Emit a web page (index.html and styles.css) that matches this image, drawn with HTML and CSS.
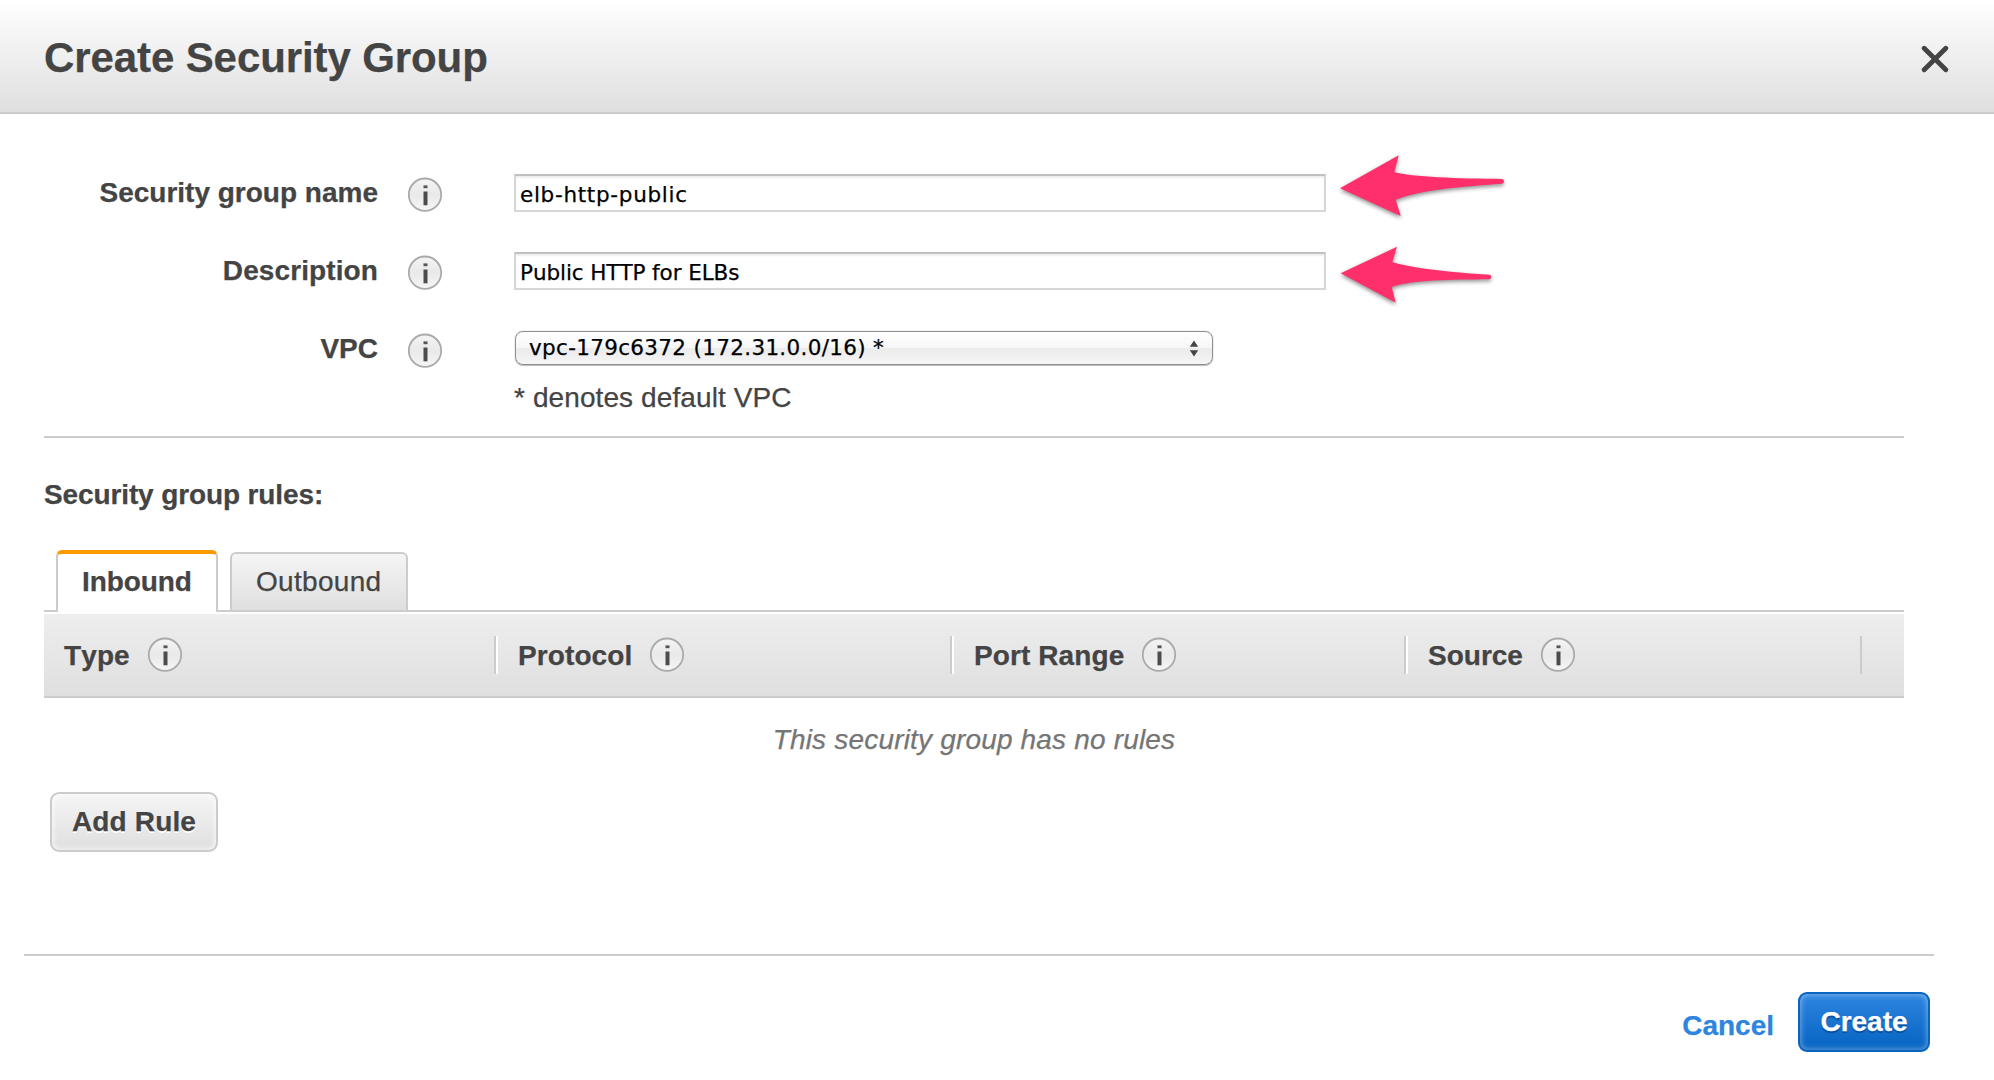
FILE: index.html
```html
<!DOCTYPE html>
<html lang="en">
<head>
<meta charset="utf-8">
<title>Create Security Group</title>
<link rel="stylesheet" href="styles.css">
</head>
<body>
<svg width="0" height="0" class="defs" aria-hidden="true">
  <defs>
    <linearGradient id="info-fill" x1="0" y1="0" x2="0" y2="1">
      <stop offset="0" stop-color="#f4f4f4"/>
      <stop offset=".5" stop-color="#e9e9e9"/>
      <stop offset="1" stop-color="#f6f6f6"/>
    </linearGradient>
    <symbol id="info" viewBox="0 0 36 36">
      <circle cx="18" cy="17.7" r="16.2" fill="url(#info-fill)" stroke="#aaa" stroke-width="1.8"/>
      <rect x="16.5" y="8.4" width="4" height="2.8" fill="#555"/>
      <rect x="16.500" y="14.500" width="4" height="13.800" fill="#4c4c4c"/>
    </symbol>
  </defs>
</svg>
<div class="dialog">
  <header class="header">
    <h1 class="title">Create Security Group</h1>
    <svg class="close" viewBox="0 0 28 28"><path d="M3.2 3.2 24.8 24.8M24.8 3.2 3.2 24.8" fill="none" stroke="#444" stroke-width="4.8" stroke-linecap="round"/></svg>
  </header>
  <main class="body">
    <form class="form">
      <div class="row">
        <label class="label">Security group name</label>
        <svg class="info"><use href="#info"/></svg>
        <div class="field"><span class="name">elb-http-public</span></div>
      </div>
      <div class="row">
        <label class="label label-wide">Description</label>
        <svg class="info"><use href="#info"/></svg>
        <div class="field"><span class="desc">Public HTTP for ELBs</span></div>
      </div>
      <div class="row">
        <label class="label">VPC</label>
        <svg class="info"><use href="#info"/></svg>
        <div class="select"><span class="vpc">vpc-179c6372 (172.31.0.0/16) *</span>
          <svg class="stepper" viewBox="0 0 10 16"><path d="M.8 6.2 5 0l4.200 6.200zM.8 9.800 5 16l4.200-6.200z" fill="#444"/></svg>
        </div>
      </div>
      <p class="note">* denotes default VPC</p>
    </form>
    <h2 class="subtitle">Security group rules:</h2>
    <nav class="tabs">
      <div class="tab tab-active">Inbound</div>
      <div class="tab">Outbound</div>
    </nav>
    <div class="columns">
      <div class="column"><span class="heading">Type</span><svg class="info"><use href="#info"/></svg></div>
      <div class="column"><span class="heading">Protocol</span><svg class="info"><use href="#info"/></svg></div>
      <div class="column"><span class="heading">Port Range</span><svg class="info"><use href="#info"/></svg></div>
      <div class="column column-last"><span class="heading">Source</span><svg class="info"><use href="#info"/></svg></div>
    </div>
    <p class="empty">This security group has no rules</p>
    <button class="button add">Add Rule</button>
  </main>
  <footer class="footer">
    <a class="cancel">Cancel</a>
    <button class="button create">Create</button>
  </footer>
  <svg class="arrows" viewBox="0 0 180 170">
    <path d="M10 38.3 68.7 5.3 64.3 22.3C82 27 128 28.6 172 29A2.4 2.4 0 0 1 172.2 33.7C128 36.5 86 41 65.7 49.7L70.7 66Z"/>
    <path d="M10.7 123.300 67 96.700 62.300 112C82 118.500 120 122 159 124.800A2.200 2.200 0 0 1 159 129.300C120 129.600 82 130 61.700 137L65.700 152.700Z"/>
  </svg>
</div>
</body>
</html>
```

FILE: styles.css
```css
* { box-sizing: border-box; }
body {
  margin: 0;
  background: #fff;
  color: #444;
  font: 28px/32px "Liberation Sans", Arial, Helvetica, sans-serif;
  font-kerning: none;
  -webkit-text-stroke: .25px;
}
h1, h2, p { margin: 0; }
.defs { position: absolute; }
.dialog { position: relative; height: 1080px; overflow: hidden; display: flex; flex-direction: column; }

.header {
  height: 114px;
  padding: 0 44px;
  display: flex;
  align-items: center;
  justify-content: space-between;
  background: linear-gradient(#fff, #dfdfdf);
  border-bottom: 2px solid #ccc;
}
.title { font-size: 42px; line-height: 48px; padding-top: 3px; letter-spacing: -.1px; }
.close { width: 28px; height: 28px; margin: 6px 1px 0 0; }

.body { height: 840px; padding: 0 90px 0 44px; }
.form { height: 324px; padding-top: 60px; border-bottom: 2px solid #ccc; }
.row { height: 78px; display: flex; align-items: flex-start; }
.label { width: 334px; padding-top: 3px; text-align: right; font-weight: bold; }
.label-wide { letter-spacing: .1px; }
.info { width: 36px; height: 36px; flex: none; }
.row .info { margin: 3px 0 0 29px; }
.field, .select {
  margin-left: 71px;
  color: #000;
  font-family: "DejaVu Sans", sans-serif;
  font-size: 21.5px;
}
.field {
  width: 812px;
  height: 38px;
  padding-left: 4px;
  line-height: 37px;
  border: 2px solid #d6d6d6;
  border-top-color: #c0c0c0;
  box-shadow: inset 0 2px 2px #eee;
}
.select {
  width: 698px;
  height: 34px;
  margin: 1px 0 0 72px;
  padding: 0 13px;
  display: flex;
  align-items: center;
  justify-content: space-between;
  border: 1px solid #8f8f8f;
  border-radius: 8px;
  background: linear-gradient(#fff, #f6f6f6 50%, #ebebeb 51%, #f5f5f5);
  box-shadow: 0 1px 1px #bbb, 0 0 1px #999;
}
.name { letter-spacing: .7px; }
.desc { letter-spacing: -.08px; }
.vpc { letter-spacing: .32px; }
.stepper { width: 10px; height: 17px; }
.note { margin: -26px 0 0 470px; letter-spacing: .1px; }

.subtitle { margin-top: 41px; font-size: 28px; letter-spacing: -.12px; }
.tabs {
  margin-top: 39px;
  height: 62px;
  padding-left: 12px;
  display: flex;
  align-items: flex-end;
  gap: 12px;
  border-bottom: 2px solid #ccc;
}
.tab {
  width: 178px;
  height: 58px;
  padding: 12px 0 0 24px;
  border: 2px solid #ccc;
  border-bottom: 0;
  border-radius: 6px 6px 0 0;
  background: linear-gradient(#f5f5f5, #dfdfdf);
  letter-spacing: .3px;
}
.tab-active {
  width: 162px;
  height: 62px;
  margin-bottom: -2px;
  border-top: 4px solid #f90;
  background: #fff;
  font-weight: bold;
  letter-spacing: -.1px;
}
.columns {
  height: 84px;
  margin-top: 2px;
  padding-right: 42px;
  display: grid;
  grid-template-columns: 452px 456px 454px 456px;
  align-items: center;
  background: linear-gradient(#eee, #dfdfdf);
  border-bottom: 2px solid #ccc;
  font-weight: bold;
}
.column {
  height: 38px;
  padding-left: 22px;
  display: flex;
  align-items: center;
  gap: 17px;
  border-right: 2px solid #ccc;
  box-shadow: 2px 0 #fff;
}
.column:first-child { padding-left: 20px; }
.heading { padding-top: 2px; letter-spacing: .1px; }
.column-last { box-shadow: none; }
.column-last .heading { letter-spacing: 0; }
.empty { margin-top: 26px; text-align: center; font-style: italic; color: #757575; letter-spacing: .18px; }

.button {
  height: 60px;
  padding: 0 0 2px;
  border: 2px solid #ccc;
  border-radius: 9px;
  font: bold 28px/32px "Liberation Sans", Arial, sans-serif;
}
.add {
  display: block;
  width: 168px;
  margin: 36px 0 0 6px;
  padding: 0;
  letter-spacing: .15px;
  color: #444;
  background: linear-gradient(#f5f5f5, #dfdfdf);
  box-shadow: inset 0 0 6px #fff;
  text-shadow: 0 2px #fff;
}
.footer {
  height: 126px;
  margin: 0 60px 0 24px;
  padding: 36px 4px 0 0;
  display: flex;
  justify-content: flex-end;
  align-items: flex-start;
  border-top: 2px solid #ccc;
}
.cancel { margin: 18px 24px 0 0; font-weight: bold; color: #2e85e0; }
.create {
  width: 132px;
  padding: 0 0 1px;
  color: #fff;
  border-color: #0a64be;
  background: linear-gradient(#2e85e0, #0563c1);
  box-shadow: inset 0 0 6px rgba(255, 255, 255, .5);
  text-shadow: 0 2px 1px #0a4e9b;
}

/* Annotation arrows lie over the form */
.arrows {
  position: absolute;
  left: 1330px;
  top: 150px;
  width: 180px;
  height: 170px;
  fill: #ff2f6c;
  filter: drop-shadow(0 2px 2px rgba(0, 0, 0, .45));
}
```
